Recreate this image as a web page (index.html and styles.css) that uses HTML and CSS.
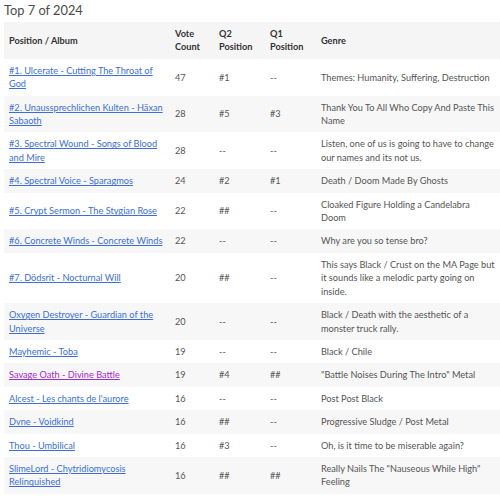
FILE: index.html
```html
<!DOCTYPE html>
<html>
<head>
<meta charset="utf-8">
<link rel="stylesheet" href="styles.css">
</head>
<body>
<h2 class="title">Top 7 of 2024</h2>
<table class="list">
<colgroup>
<col class="c-album"><col class="c-votes"><col class="c-q2"><col class="c-q1"><col class="c-genre">
</colgroup>
<thead>
<tr><th>Position / Album</th><th>Vote Count</th><th>Q2 Position</th><th>Q1 Position</th><th>Genre</th></tr>
</thead>
<tbody>
<tr><td><a href="#">#1. Ulcerate - Cutting The Throat of God</a></td><td>47</td><td>#1</td><td>--</td><td>Themes: Humanity, Suffering, Destruction</td></tr>
<tr><td><a href="#">#2. Unaussprechlichen Kulten - Häxan Sabaoth</a></td><td>28</td><td>#5</td><td>#3</td><td>Thank You To All Who Copy And Paste This Name</td></tr>
<tr><td><a href="#">#3. Spectral Wound - Songs of Blood and Mire</a></td><td>28</td><td>--</td><td>--</td><td>Listen, one of us is going to have to change our names and its not us.</td></tr>
<tr><td><a href="#">#4. Spectral Voice - Sparagmos</a></td><td>24</td><td>#2</td><td>#1</td><td>Death / Doom Made By Ghosts</td></tr>
<tr><td><a href="#">#5. Crypt Sermon - The Stygian Rose</a></td><td>22</td><td>##</td><td>--</td><td>Cloaked Figure Holding a Candelabra Doom</td></tr>
<tr><td><a href="#">#6. Concrete Winds - Concrete Winds</a></td><td>22</td><td>--</td><td>--</td><td>Why are you so tense bro?</td></tr>
<tr><td><a href="#">#7. Dödsrit - Nocturnal Will</a></td><td>20</td><td>##</td><td>--</td><td>This says Black / Crust on the MA Page but it sounds like a melodic party going on inside.</td></tr>
<tr><td><a href="#">Oxygen Destroyer - Guardian of the Universe</a></td><td>20</td><td>--</td><td>--</td><td>Black / Death with the aesthetic of a monster truck rally.</td></tr>
<tr><td><a href="#">Mayhemic - Toba</a></td><td>19</td><td>--</td><td>--</td><td>Black / Chile</td></tr>
<tr><td><a href="#" class="visited">Savage Oath - Divine Battle</a></td><td>19</td><td>#4</td><td>##</td><td>"Battle Noises During The Intro" Metal</td></tr>
<tr><td><a href="#">Alcest - Les chants de l'aurore</a></td><td>16</td><td>--</td><td>--</td><td>Post Post Black</td></tr>
<tr><td><a href="#">Dvne - Voidkind</a></td><td>16</td><td>##</td><td>--</td><td>Progressive Sludge / Post Metal</td></tr>
<tr><td><a href="#">Thou - Umbilical</a></td><td>16</td><td>#3</td><td>--</td><td>Oh, is it time to be miserable again?</td></tr>
<tr><td><a href="#">SlimeLord - Chytridiomycosis Relinquished</a></td><td>16</td><td>##</td><td>##</td><td>Really Nails The "Nauseous While High" Feeling</td></tr>
</tbody>
</table>
</body>
</html>
```
FILE: styles.css
```css
html, body {
  margin: 0;
  padding: 0;
  background: #fff;
}
body {
  padding: 0 0 0 4px;
  font-family: "Lato", "Open Sans", sans-serif;
  color: #555;
  overflow: hidden;
}
.title {
  margin: 0;
  padding-bottom: 2px;
  font-weight: 400;
  font-size: 12.8px;
  line-height: 20px;
  color: #4a4a4a;
}
.list {
  border-collapse: collapse;
  table-layout: fixed;
  width: 497px;
  font-size: 9.2px;
  line-height: 13.4px;
}
.c-album { width: 166px; }
.c-votes { width: 44px; }
.c-q2 { width: 51px; }
.c-q1 { width: 51px; }
.c-genre { width: 185px; }
.list th {
  background: #f5f5f5;
  color: #333;
  font-weight: 700;
  text-align: left;
  padding: 5px;
  vertical-align: middle;
}
.list td {
  padding: 5px;
  vertical-align: middle;
}
.list tbody tr:nth-child(even) td {
  background: #f7f7f7;
}
.list a {
  color: #3b6fd6;
  text-decoration: underline;
}
.list a.visited {
  color: #a52ad0;
}
```
